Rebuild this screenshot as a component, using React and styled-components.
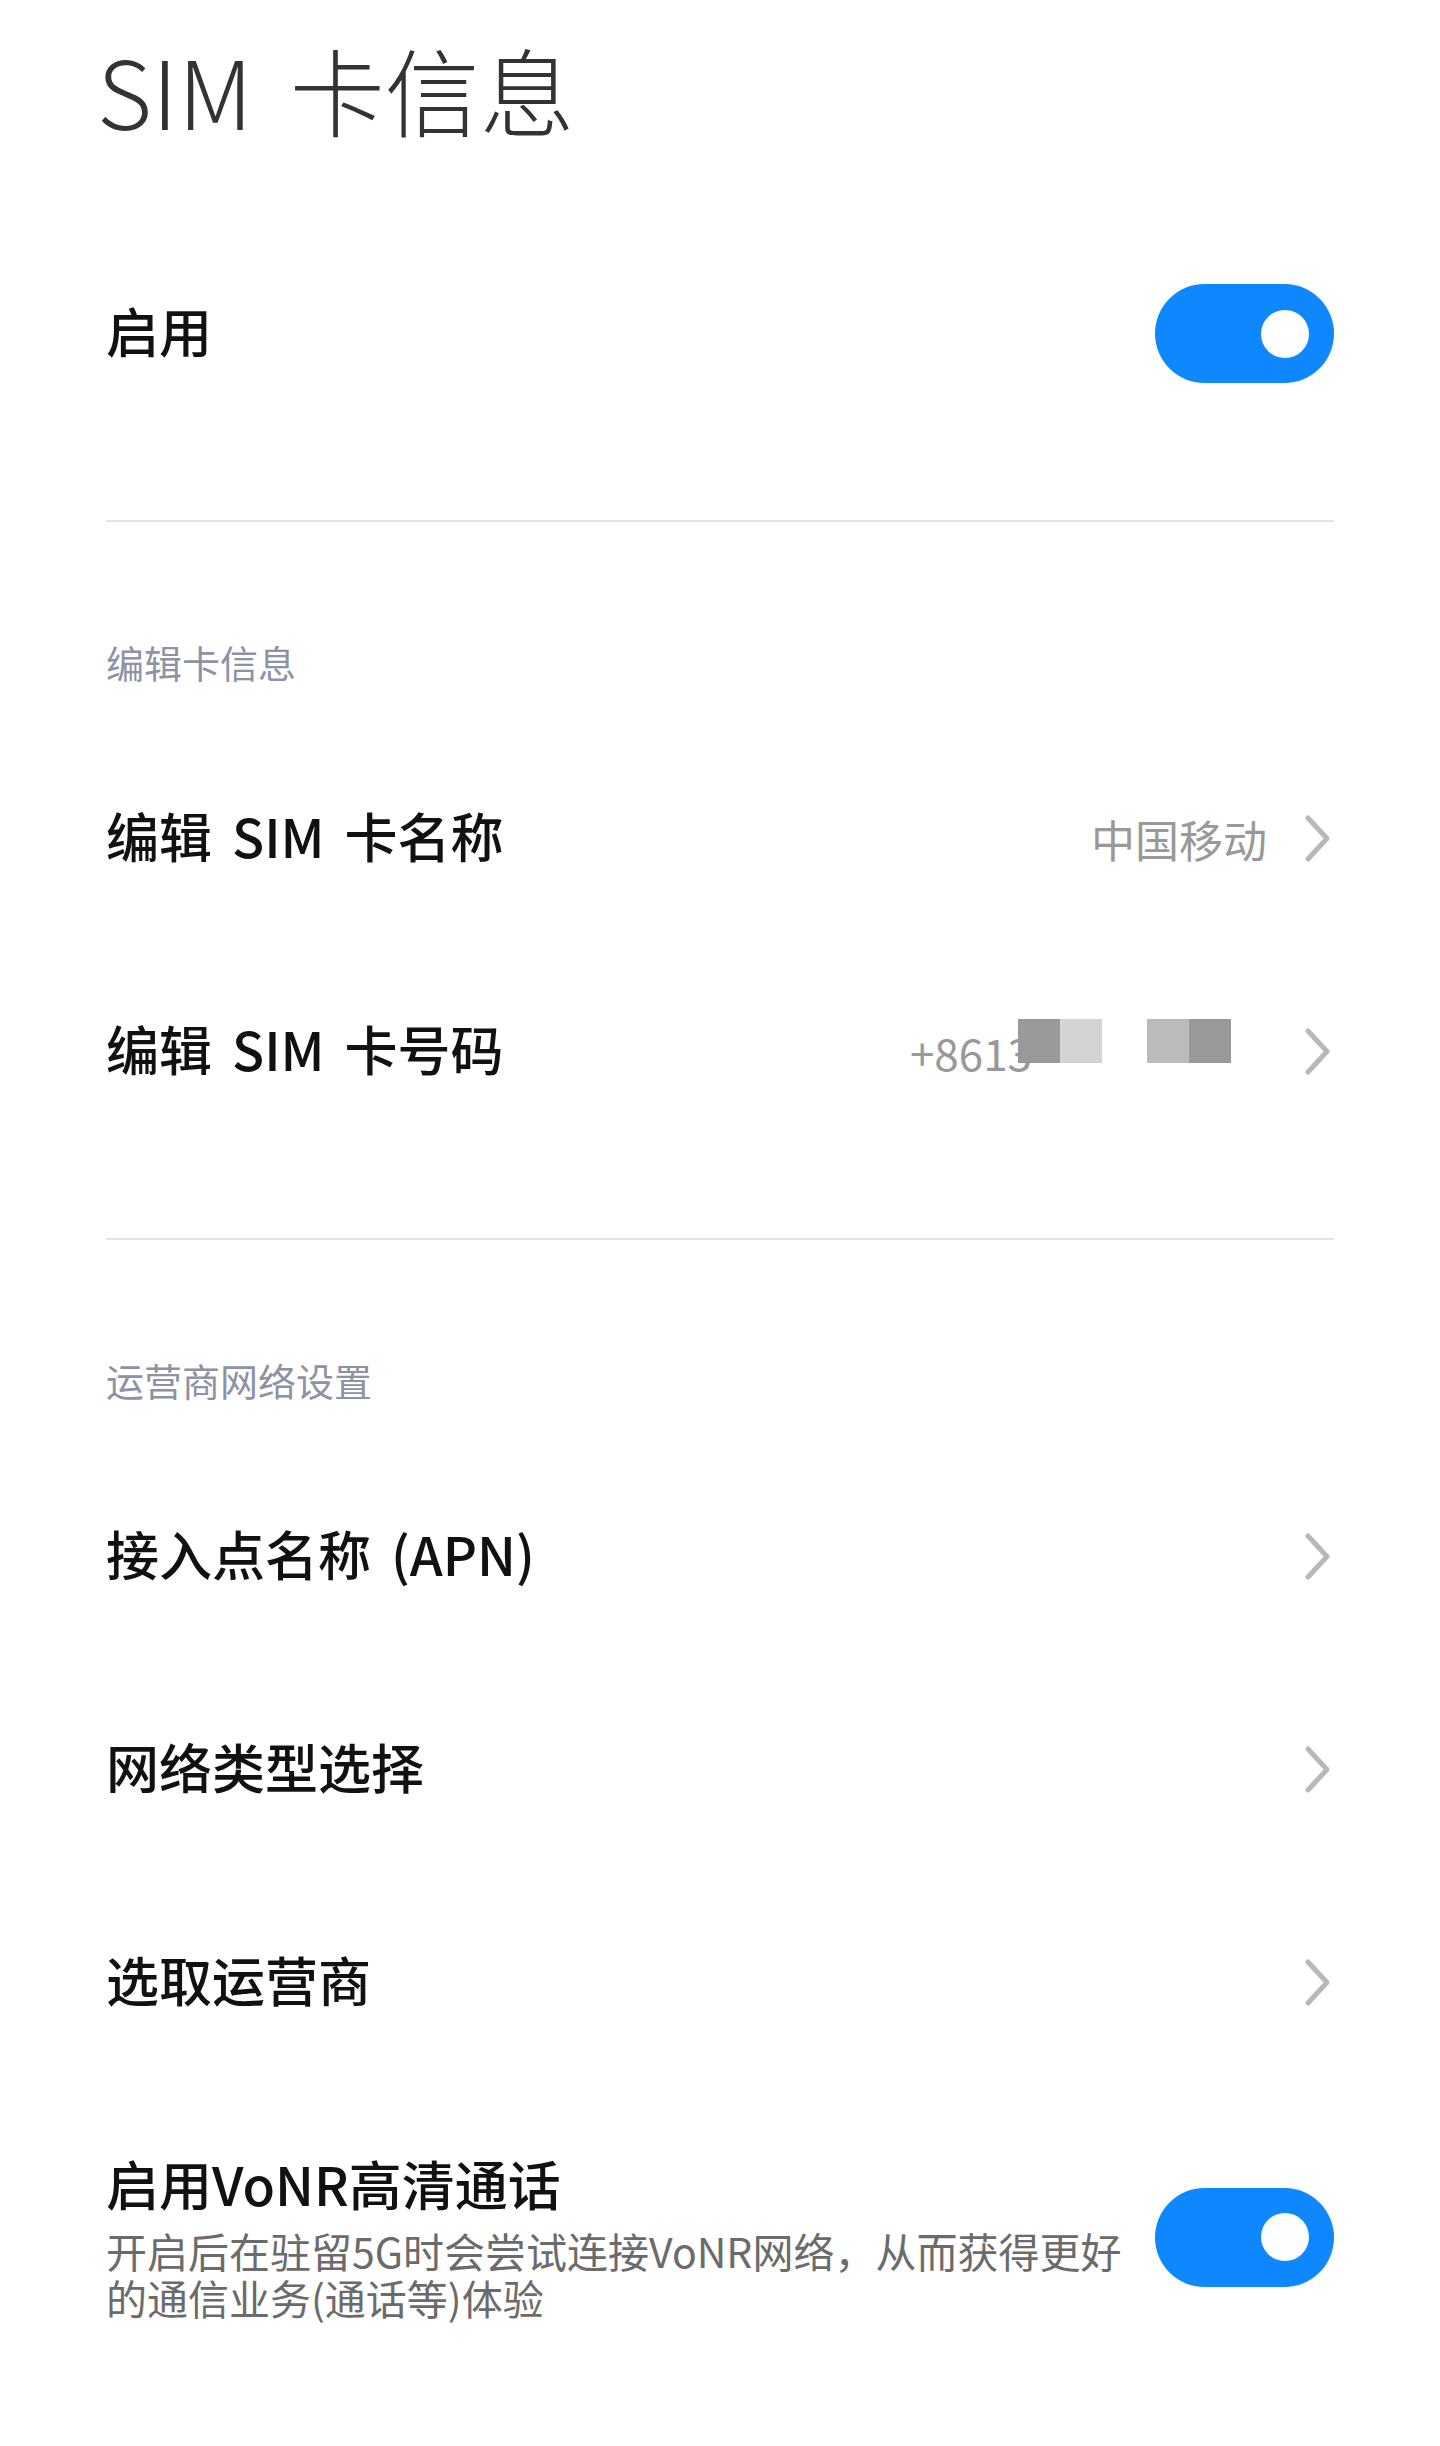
import styled, { createGlobalStyle } from "styled-components";

const GlobalStyle = createGlobalStyle`
  body {
    margin: 0;
    background: #fff;
    font-family: "Noto Sans CJK SC", "Noto Sans", sans-serif;
  }
`;

const Page = styled.div`
  width: 1440px;
  min-height: 2446px;
  box-sizing: border-box;
  padding: 0 106px;
  background: #fff;
`;

const Title = styled.h1`
  margin: 0 0 0 -9px;
  height: 186px;
  line-height: 178px;
  font-size: 95px;
  font-weight: 300;
  color: #333;
  word-spacing: 16px;
`;

const Row = styled.div`
  display: flex;
  align-items: center;
  justify-content: space-between;
  height: 213px;
  margin-top: ${(p) => p.$top || 0}px;
`;

const Label = styled.div`
  font-size: 53px;
  font-weight: 500;
  color: #111;
  line-height: 60px;
  word-spacing: 8px;
  padding-bottom: ${(p) => (p.$lift ? 8 : 0)}px;
`;

const Divider = styled.div`
  height: 2px;
  background: #e4e4e4;
  margin-top: 80px;
`;

const SectionHead = styled.div`
  margin-top: 100px;
  margin-bottom: 30px;
  height: 80px;
  line-height: 80px;
  font-size: 38px;
  color: #8d92a4;
`;

const Right = styled.div`
  display: flex;
  align-items: center;
  gap: 38px;
`;

const Value = styled.span`
  font-size: 44px;
  color: #999;
`;

const PhoneValue = styled.div`
  display: flex;
  align-items: center;
`;

const Mosaic = styled.div`
  display: flex;
  gap: 45px;
  margin-left: -14px;
  margin-right: 36px;
  margin-bottom: 22px;
`;

const MosaicPair = styled.div`
  display: flex;
`;

const Cell = styled.div`
  width: 42px;
  height: 44px;
  background: ${(p) => p.$c};
`;

const Switch = styled.div`
  flex-shrink: 0;
  width: 179px;
  height: 99px;
  border-radius: 50px;
  background: #0f87ff;
  display: flex;
  align-items: center;
  justify-content: flex-end;
  padding-right: 25px;
  box-sizing: border-box;
`;

const Knob = styled.div`
  width: 48px;
  height: 48px;
  border-radius: 50%;
  background: #fff;
`;

const VoRow = styled.div`
  display: flex;
  align-items: center;
  gap: 20px;
  padding-top: 64px;
`;

const VoText = styled.div`
  flex: 1;
`;

const Sub = styled.div`
  margin-top: 14px;
  max-width: 1030px;
  font-size: 41px;
  line-height: 47px;
  color: #6b6b6b;
`;

const ChevronIcon = styled.svg`
  flex-shrink: 0;
  margin-right: 4px;
`;

const Chevron = () => (
  <ChevronIcon width="25" height="47" viewBox="0 0 25 47" fill="none">
    <polyline
      points="3,3 22,23.5 3,44"
      stroke="#b8b8b8"
      strokeWidth="5"
      strokeLinecap="round"
      strokeLinejoin="round"
    />
  </ChevronIcon>
);

const Toggle = () => (
  <Switch>
    <Knob />
  </Switch>
);

const App = () => {
  return (
    <Page>
      <GlobalStyle />
      <Title>SIM 卡信息</Title>

      <Row $top={41}>
        <Label $lift>启用</Label>
        <Toggle />
      </Row>
      <Divider />

      <SectionHead>编辑卡信息</SectionHead>
      <Row>
        <Label $lift>编辑 SIM 卡名称</Label>
        <Right>
          <Value>中国移动</Value>
          <Chevron />
        </Right>
      </Row>
      <Row>
        <Label $lift>编辑 SIM 卡号码</Label>
        <Right>
          <PhoneValue>
            <Value>+8613</Value>
            <Mosaic>
              <MosaicPair>
                <Cell $c="#999" />
                <Cell $c="#d4d4d4" />
              </MosaicPair>
              <MosaicPair>
                <Cell $c="#bbb" />
                <Cell $c="#999" />
              </MosaicPair>
            </Mosaic>
          </PhoneValue>
          <Chevron />
        </Right>
      </Row>
      <Divider />

      <SectionHead>运营商网络设置</SectionHead>
      {["接入点名称 (APN)", "网络类型选择", "选取运营商"].map((item) => (
        <Row key={item}>
          <Label $lift>{item}</Label>
          <Chevron />
        </Row>
      ))}

      <VoRow>
        <VoText>
          <Label>启用VoNR高清通话</Label>
          <Sub>开启后在驻留5G时会尝试连接VoNR网络，从而获得更好的通信业务(通话等)体验</Sub>
        </VoText>
        <Toggle />
      </VoRow>
    </Page>
  );
};

export default App;
